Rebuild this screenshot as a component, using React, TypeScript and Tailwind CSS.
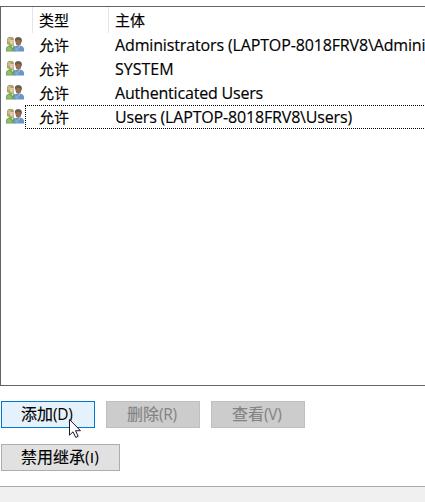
type Entry = { access: string; principal: string; spacing: string; focused?: boolean };

const entries: Entry[] = [
  { access: '允许', principal: 'Administrators (LAPTOP-8018FRV8\\Admini', spacing: 'tracking-[-0.14px]' },
  { access: '允许', principal: 'SYSTEM', spacing: '' },
  { access: '允许', principal: 'Authenticated Users', spacing: 'tracking-[-0.19px]' },
  { access: '允许', principal: 'Users (LAPTOP-8018FRV8\\Users)', spacing: 'tracking-[-0.17px]', focused: true },
];

function UsersIcon() {
  return (
    <svg width="18" height="16" viewBox="0 0 18 16" className="block shrink-0">
      <path d="M0 15.5V12.8Q0 10.5 2.5 9.8L4 8.9L7.5 9L9.5 11V15.5Z" fill="#75a653" />
      <path d="M1 14.5V12.8Q1 11.2 3 10.4L5 12L6 14.5Z" fill="#95bd70" />
      <path d="M1 8.2V4.3Q1 .7 4.4.7Q8.3.7 8.1 4.7L7.8 8.7L5.5 9.7Z" fill="#aa9e69" />
      <path d="M3.8 3.7Q6 4.5 7.8 3.7V6.5Q7.3 8.7 5.7 8.7Q3.8 8.5 3.8 6Z" fill="#e3c9a8" />
      <path d="M1.8 4.2Q2.4 1.6 4.8 1.5L4 4.3L3 7.2Z" fill="#cfc38d" />
      <path d="M4 8.8L5.6 10.5L7.3 8.8L7 12Z" fill="#edf0dc" />
      <path d="M7.8 15.5V12.3Q8 10.5 10.5 9.8H15Q17.7 10.5 18 12.8V15.5Z" fill="#6795c5" />
      <path d="M9 14.5V12.8L12 11.3L13 14.5Z" fill="#82add7" />
      <path d="M9 4.5Q9 1.2 12.4 1.2Q16 1.2 15.7 5.2L14.7 8.5L13 10L10.3 9Z" fill="#946f53" />
      <path d="M9 4.5Q8.7 1.2 12.3 1.2Q16.2 1.2 15.7 5.3L14.7 6.2L14.3 3.9H11L10 5.2Z" fill="#675b50" />
      <path d="M11 9.5L12.8 11L14.5 9.5L13.3 12.3Z" fill="#a9c8df" />
    </svg>
  );
}

function ActionButton({ label, mnemonic, className }: { label: string; mnemonic: string; className: string }) {
  return (
    <button className={`flex h-[27px] items-center border pb-px text-[16px] leading-none ${className}`}>
      <span>{label}</span>
      <span className="pt-[2px] text-[15.5px] tracking-[-0.3px] [-webkit-text-stroke:0px]">
        ({mnemonic === 'I' ? <span className="px-[0.5px] font-['Liberation_Sans',sans-serif]">I</span> : mnemonic})
      </span>
    </button>
  );
}

export default function App() {
  return (
    <main className="flex h-[502px] w-[425px] flex-col overflow-hidden bg-white pt-[6px] font-['Open_Sans','Noto_Sans_CJK_SC',sans-serif] text-black [-webkit-text-stroke:0.15px]">
      <section className="h-[380px] shrink-0 overflow-hidden border-y border-l border-[#646464] text-[15px] leading-[24px]">
        <header className="flex h-[26px] items-center">
          <div className="h-full w-[32px] border-r border-[#e5e5e5]" />
          <div className="h-full w-[76px] border-r border-[#e5e5e5] pl-[6px] pt-px">类型</div>
          <div className="h-full pl-[6px] pt-px">主体</div>
        </header>
        {entries.map((entry) => (
          <div key={entry.principal} className="flex h-[24px] items-center">
            <div className="w-[24px] shrink-0 pb-[2px] pl-[5px]"><UsersIcon /></div>
            <div className={`flex h-[24px] w-[401px] shrink-0 items-center border-y border-l border-dotted ${entry.focused ? 'border-black' : 'border-transparent'}`}>
              <span className="w-[76px] shrink-0 pl-[13px]">{entry.access}</span>
              <span className={`whitespace-nowrap pl-[13px] text-[16px] ${entry.spacing}`}>{entry.principal}</span>
            </div>
          </div>
        ))}
      </section>
      <section className="relative h-[100px] shrink-0 pl-px pt-[15px]">
        <div className="flex gap-[11px]">
          <ActionButton label="添加" mnemonic="D" className="w-[94px] border-[#0078d7] bg-[#e5f1fb] pl-[19px]" />
          <ActionButton label="删除" mnemonic="R" className="w-[94px] border-[#bfbfbf] bg-[#cccccc] pl-[20px] text-[#838383]" />
          <ActionButton label="查看" mnemonic="V" className="w-[94px] border-[#bfbfbf] bg-[#cccccc] pl-[20px] text-[#838383]" />
        </div>
        <div className="mt-[16px] flex">
          <ActionButton label="禁用继承" mnemonic="I" className="w-[119px] border-[#adadad] bg-[#e1e1e1] pl-[19px]" />
        </div>
        <svg width="13" height="20" viewBox="0 0 13 20" className="absolute left-[69px] top-[33px]">
          <path d="M.5.5V16.2L4 12.8L6.8 18.5L9.2 17.3L6.5 11.7H11.5Z" fill="white" stroke="#1b1b2b" />
        </svg>
      </section>
      <footer className="flex-1 border-t border-[#a9a9a9] bg-[#f0f0f0]" />
    </main>
  );
}
